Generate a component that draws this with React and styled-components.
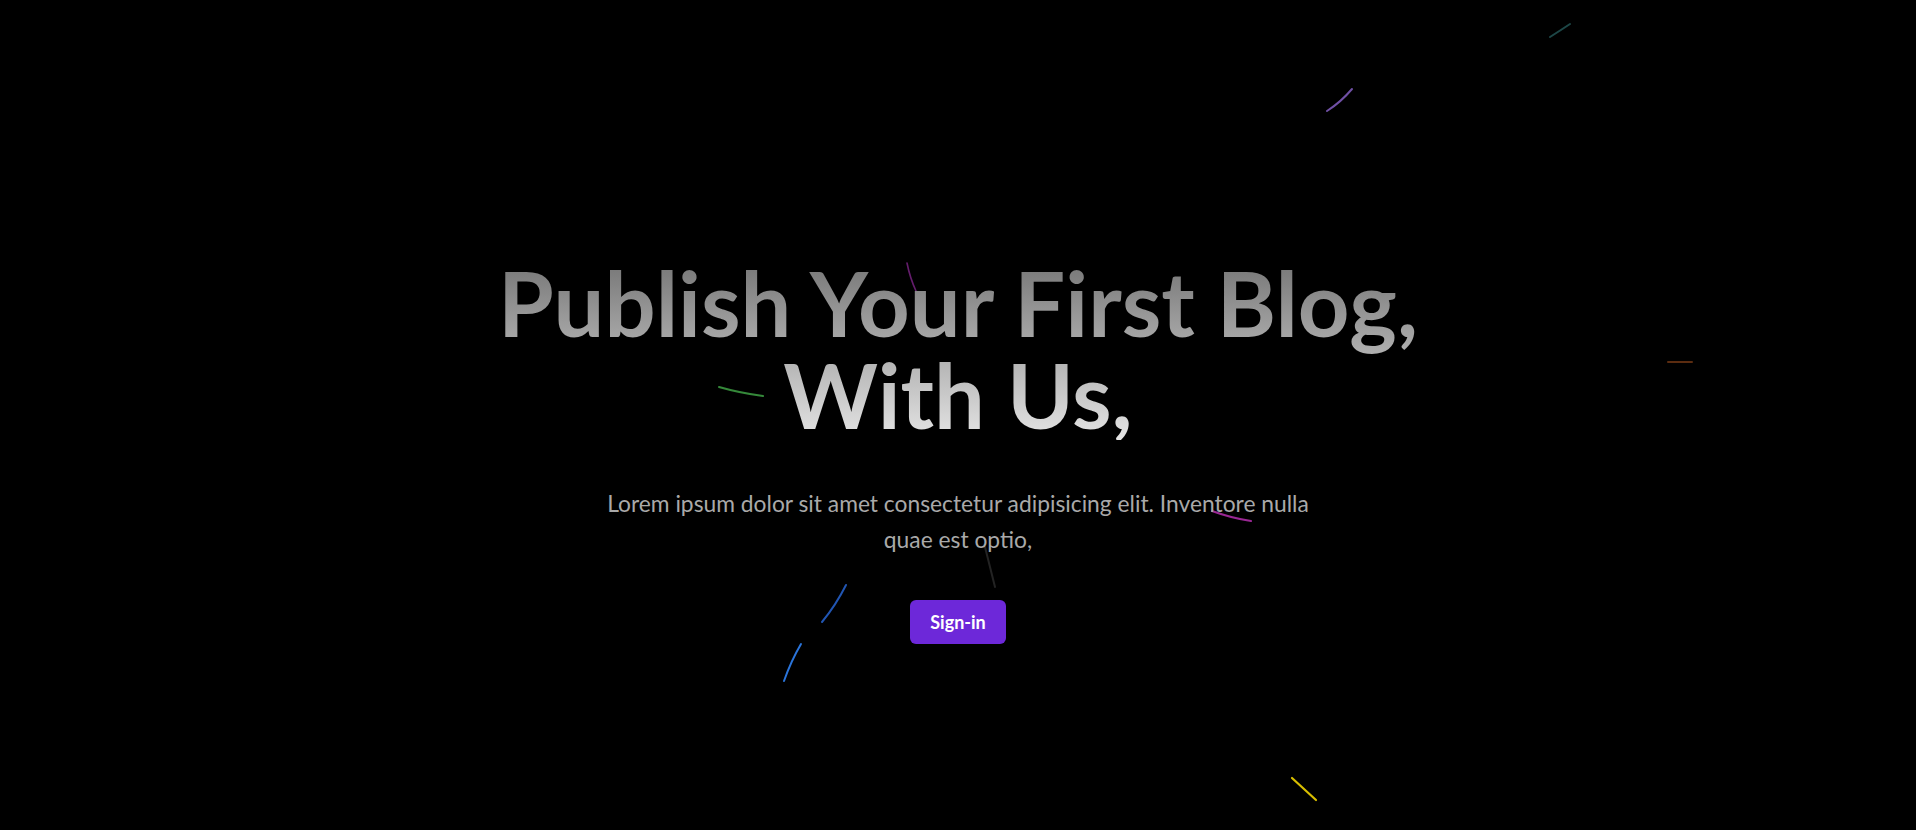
import React from "react";
import styled, { createGlobalStyle } from "styled-components";

const Global = createGlobalStyle`
  html, body { margin: 0; padding: 0; background: #000; }
  body { font-family: Lato, "Open Sans", sans-serif; }
  * { box-sizing: border-box; }
`;

const Page = styled.main`
  position: relative;
  height: 100vh;
  min-height: 830px;
  background: #000;
  overflow: hidden;
  display: flex;
  flex-direction: column;
  align-items: center;
  justify-content: center;
  padding-top: 69px;
`;

const Sky = styled.svg`
  position: absolute;
  inset: 0;
  width: 100%;
  height: 100%;
  z-index: 0;
  pointer-events: none;
`;

const Hero = styled.section`
  position: relative;
  z-index: 1;
  display: flex;
  flex-direction: column;
  align-items: center;
  text-align: center;
`;

const Title = styled.h1`
  margin: 0;
  font-family: Lato, "Open Sans", sans-serif;
  font-weight: 700;
  font-size: 90.2px;
  line-height: 92px;
  background: linear-gradient(to bottom, #737373, #e5e5e5);
  -webkit-background-clip: text;
  background-clip: text;
  color: transparent;
`;

const Lead = styled.p`
  margin: 45px 0 0;
  max-width: 720px;
  font-family: Lato, "Open Sans", sans-serif;
  font-weight: 400;
  font-size: 22.8px;
  line-height: 36px;
  color: #a9a9a9;
`;

const SignIn = styled.button`
  margin-top: 43px;
  height: 44px;
  padding: 0 20px;
  border: none;
  border-radius: 6px;
  background: #6d28d9;
  color: #fff;
  font-family: Lato, "Open Sans", sans-serif;
  font-weight: 700;
  font-size: 18px;
  cursor: pointer;
`;

const streaks = [
  { d: "M1550 37 Q1561 30 1570 24", c: "#1d4747", w: 2 },
  { d: "M1327 111 Q1341 102 1352 89", c: "#7050a5", w: 2 },
  { d: "M907 263 Q910 278 916 291", c: "#641d6c", w: 1.6 },
  { d: "M719 387 Q740 393 763 396", c: "#35893a", w: 2 },
  { d: "M1668 362 L1692 362", c: "#5c2c10", w: 2 },
  { d: "M1212 511 Q1231 518 1251 521", c: "#9a2894", w: 2 },
  { d: "M985 547 Q990 567 995 587", c: "#232323", w: 2 },
  { d: "M846 585 Q836 605 822 622", c: "#2155b2", w: 2 },
  { d: "M801 644 Q791 661 784 681", c: "#2a74da", w: 2 },
  { d: "M1292 778 L1316 800", c: "#d8be00", w: 2.2 },
];

export default function App() {
  return (
    <Page>
      <Global />
      <Sky viewBox="0 0 1916 830" preserveAspectRatio="xMinYMin slice">
        {streaks.map((s, i) => (
          <path key={i} d={s.d} stroke={s.c} strokeWidth={s.w} fill="none" strokeLinecap="round" />
        ))}
      </Sky>
      <Hero>
        <Title>
          Publish Your First Blog,
          <br />
          With Us,
        </Title>
        <Lead>
          Lorem ipsum dolor sit amet consectetur adipisicing elit. Inventore nulla quae est optio,
        </Lead>
        <SignIn>Sign-in</SignIn>
      </Hero>
    </Page>
  );
}
